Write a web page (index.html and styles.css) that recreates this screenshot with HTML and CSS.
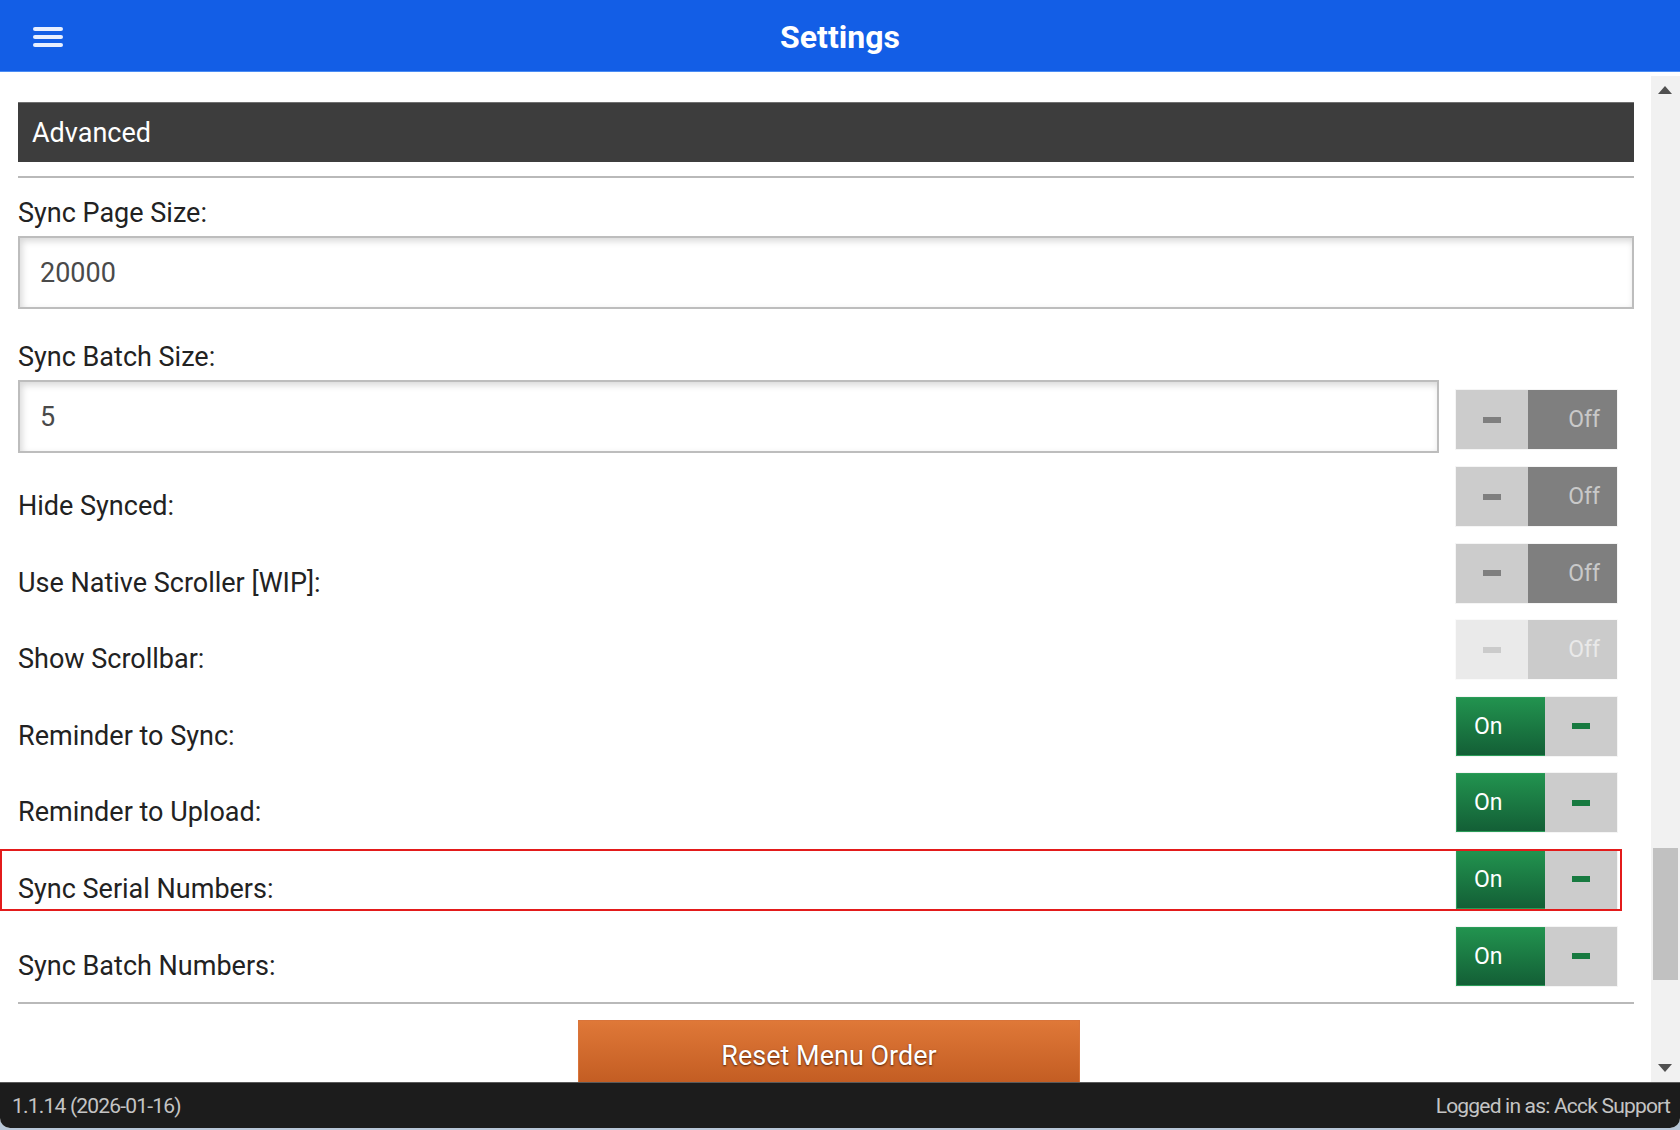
FILE: index.html
```html
<!DOCTYPE html>
<html lang="en">
<head>
<meta charset="utf-8">
<title>Settings</title>
<link rel="stylesheet" href="styles.css">
</head>
<body>
<div class="app">
  <header class="topbar">
    <button class="menu-btn" aria-label="Menu">
      <svg width="30" height="22" viewBox="0 0 30 22"><g stroke="#e8efff" stroke-width="4" stroke-linecap="round"><line x1="2" y1="3" x2="28" y2="3"/><line x1="2" y1="11" x2="28" y2="11"/><line x1="2" y1="19" x2="28" y2="19"/></g></svg>
    </button>
    <h1 class="title">Settings</h1>
  </header>

  <div class="main">
    <div class="content">
      <div class="section-head">Advanced</div>
      <div class="section-body">
        <div class="field-label">Sync Page Size:</div>
        <input class="text-input" type="text" value="20000">

        <div class="field-label field-label-gap">Sync Batch Size:</div>
        <div class="input-row">
          <input class="text-input" type="text" value="5">
          <div class="flip is-off input-flip">
            <span class="flip-handle"><i class="dash"></i></span>
            <span class="flip-label">Off</span>
          </div>
        </div>

        <div class="toggle-list">
          <div class="toggle-row">
            <span class="row-label">Hide Synced:</span>
            <div class="flip is-off"><span class="flip-handle"><i class="dash"></i></span><span class="flip-label">Off</span></div>
          </div>
          <div class="toggle-row">
            <span class="row-label">Use Native Scroller [WIP]:</span>
            <div class="flip is-off"><span class="flip-handle"><i class="dash"></i></span><span class="flip-label">Off</span></div>
          </div>
          <div class="toggle-row">
            <span class="row-label">Show Scrollbar:</span>
            <div class="flip is-off is-disabled"><span class="flip-handle"><i class="dash"></i></span><span class="flip-label">Off</span></div>
          </div>
          <div class="toggle-row">
            <span class="row-label">Reminder to Sync:</span>
            <div class="flip is-on"><span class="flip-label">On</span><span class="flip-handle"><i class="dash"></i></span></div>
          </div>
          <div class="toggle-row">
            <span class="row-label">Reminder to Upload:</span>
            <div class="flip is-on"><span class="flip-label">On</span><span class="flip-handle"><i class="dash"></i></span></div>
          </div>
          <div class="toggle-row is-highlighted">
            <span class="row-label">Sync Serial Numbers:</span>
            <div class="flip is-on"><span class="flip-label">On</span><span class="flip-handle"><i class="dash"></i></span></div>
          </div>
          <div class="toggle-row">
            <span class="row-label">Sync Batch Numbers:</span>
            <div class="flip is-on"><span class="flip-label">On</span><span class="flip-handle"><i class="dash"></i></span></div>
          </div>
        </div>
      </div>
      <div class="actions">
        <button class="btn-orange">Reset Menu Order</button>
      </div>
    </div>

    <div class="scrollbar">
      <div class="sb-btn">
        <svg width="14" height="8" viewBox="0 0 14 8"><polygon points="0,8 14,8 7,0" fill="#505050"/></svg>
      </div>
      <div class="sb-track"><div class="sb-thumb"></div></div>
      <div class="sb-btn">
        <svg width="14" height="8" viewBox="0 0 14 8"><polygon points="0,0 14,0 7,8" fill="#505050"/></svg>
      </div>
    </div>
  </div>

  <footer class="statusbar">
    <span class="version">1.1.14 (2026-01-16)</span>
    <span class="user">Logged in as: Acck Support</span>
  </footer>
</div>
</body>
</html>
```

FILE: styles.css
```css
* { box-sizing: border-box; }

html, body {
  margin: 0;
  padding: 0;
  height: 100%;
}

body {
  background: #b8c7d8;
  font-family: Roboto, "Liberation Sans", Arial, sans-serif;
  color: #222;
  overflow: hidden;
}

.app {
  width: 1680px;
  height: 1128px;
  display: flex;
  flex-direction: column;
  background: #ffffff;
  border-radius: 0 0 10px 10px;
  overflow: hidden;
}

/* ---------- header ---------- */
.topbar {
  flex: none;
  height: 72px;
  background: #135ee6;
  border-bottom: 1px solid #4a8cf4;
  display: flex;
  align-items: center;
  justify-content: center;
  position: relative;
}

.menu-btn {
  position: absolute;
  left: 33px;
  top: 26px;
  padding: 0;
  margin: 0;
  border: 0;
  background: transparent;
  display: flex;
}

.title {
  margin: 0;
  padding-top: 3px;
  color: #ffffff;
  font-size: 32px;
  font-weight: 700;
  letter-spacing: 0;
}

/* ---------- main ---------- */
.main {
  flex: 1;
  display: flex;
  min-height: 0;
}

.content {
  flex: 1;
  min-width: 0;
  overflow: hidden;
  padding: 30px 17px 0 18px;
}

.section-head {
  height: 60px;
  background: #3d3d3d;
  border-top: 1px solid #707070;
  color: #ffffff;
  font-size: 27px;
  padding-left: 14px;
  display: flex;
  align-items: center;
}

.section-body {
  margin-top: 14px;
  border-top: 2px solid #b9b9b9;
  border-bottom: 2px solid #b9b9b9;
  padding-bottom: 16px;
}

.field-label {
  margin-top: 21px;
  font-size: 27px;
  line-height: 29px;
  color: #222;
}

.field-label-gap {
  margin-top: 34px;
}

.text-input {
  display: block;
  width: 100%;
  height: 73px;
  margin-top: 8px;
  border: 2px solid #bdbdbd;
  background: #ffffff;
  box-shadow: inset 2px 3px 7px rgba(0, 0, 0, 0.16);
  padding: 0 20px;
  font-family: Roboto, "Liberation Sans", Arial, sans-serif;
  font-size: 27px;
  color: #4a4a4a;
  outline: none;
}

.input-row {
  display: flex;
  align-items: flex-start;
  gap: 17px;
  margin-top: 8px;
}

.input-row .text-input {
  margin-top: 0;
  flex: 1;
  width: auto;
}

.input-flip {
  margin-top: 10px;
  margin-right: 17px;
}

.toggle-list {
  display: flex;
  flex-direction: column;
  gap: 17.6px;
  margin-top: 14px;
}

.toggle-row {
  display: flex;
  align-items: center;
  justify-content: space-between;
  height: 59px;
  position: relative;
}

.toggle-row .flip {
  margin-right: 17px;
}

.row-label {
  font-size: 27px;
  line-height: 32px;
  padding-top: 19px;
  color: #222;
}

.is-highlighted::after {
  content: "";
  position: absolute;
  left: -18px;
  right: 12px;
  top: -1px;
  bottom: -2px;
  border: 2px solid #e31b1b;
  pointer-events: none;
}

/* ---------- flip switch ---------- */
.flip {
  flex: none;
  width: 161px;
  height: 59px;
  display: flex;
  font-size: 23px;
  box-shadow: 0 0 0 1px rgba(0, 0, 0, 0.04);
}

.flip-handle {
  width: 72px;
  flex: none;
  background: #cccccc;
  display: flex;
  align-items: center;
  justify-content: center;
}

.dash {
  display: block;
  width: 18px;
  height: 6px;
  background: #7f7f7f;
}

.flip-label {
  flex: 1;
  display: flex;
  align-items: center;
}

.is-off .flip-label {
  background: #7f7f7f;
  color: #c9c9c9;
  justify-content: flex-end;
  padding-right: 17px;
}

.is-on .flip-label {
  background: linear-gradient(#22934f, #135f36);
  color: #ffffff;
  padding-left: 17px;
  border: 1px solid #2a9c58;
  border-right: 0;
}

.is-on .dash {
  background: #177a40;
}

.is-disabled {
  opacity: 0.4;
}

/* ---------- action button ---------- */
.actions {
  display: flex;
  justify-content: center;
  padding-top: 16px;
  padding-left: 6px;
}

.btn-orange {
  width: 502px;
  height: 68px;
  border: 1px solid #d9743a;
  background: linear-gradient(#df7838, #c15b21);
  color: #ffffff;
  font-family: Roboto, "Liberation Sans", Arial, sans-serif;
  font-size: 27px;
  text-shadow: 0 1px 2px rgba(60, 20, 0, 0.85);
  padding: 4px 0 0 0;
}

/* ---------- scrollbar ---------- */
.scrollbar {
  flex: none;
  width: 29px;
  padding-top: 4px;
  display: flex;
  flex-direction: column;
}

.sb-btn {
  flex: none;
  height: 28px;
  background: #f1f1f1;
  display: flex;
  align-items: center;
  justify-content: center;
  padding-right: 2px;
}

.sb-track {
  flex: 1;
  background: #f1f1f1;
  padding-left: 2px;
  padding-right: 2px;
}

.sb-thumb {
  margin-top: 744px;
  height: 132px;
  background: #c1c1c1;
}

/* ---------- footer ---------- */
.statusbar {
  flex: none;
  height: 46px;
  background: #1c1c1c;
  border-top: 1px solid #5a5a5a;
  display: flex;
  align-items: center;
  justify-content: space-between;
  padding: 0 10px 0 12px;
  color: #c4c4c4;
  font-size: 21px;
  letter-spacing: -0.8px;
}
```
